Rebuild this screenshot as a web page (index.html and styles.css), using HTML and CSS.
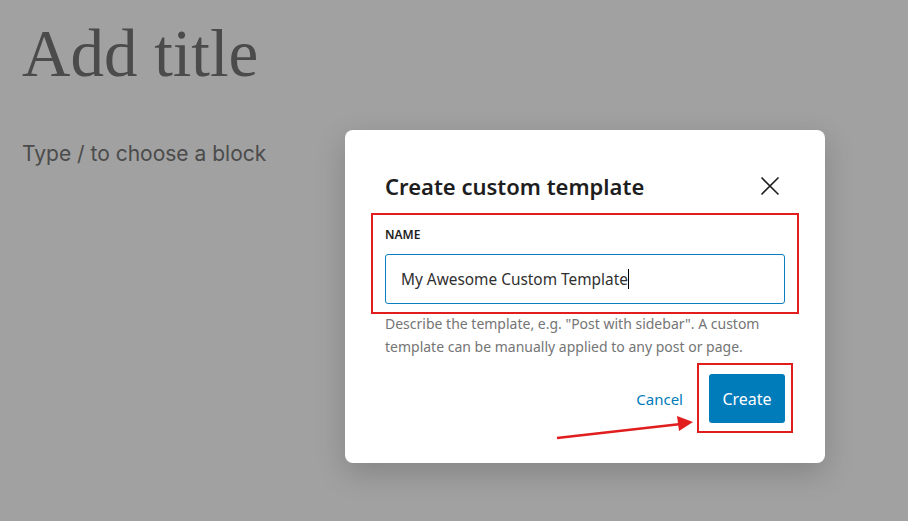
FILE: index.html
```html
<!DOCTYPE html>
<html lang="en">
<head>
    <meta charset="UTF-8">
    <meta name="viewport" content="width=device-width, initial-scale=1.0">
    <title>Create custom template</title>
    <link rel="stylesheet" href="styles.css">
</head>
<body>
    <div class="editor">
        <h1 class="post-title">Add title</h1>
        <p class="block-hint">Type / to choose a block</p>
    </div>

    <div class="modal">
        <div class="modal-header">
            <h2 class="modal-title">Create custom template</h2>
            <button class="close" aria-label="Close">
                <svg width="24" height="24" viewBox="0 0 24 24">
                    <path d="M3.5 3.5 L20.5 20.5 M20.5 3.5 L3.5 20.5" stroke="#1e1e1e" stroke-width="1.6" fill="none"/>
                </svg>
            </button>
        </div>

        <div class="field">
            <label class="field-label" for="tpl-name">NAME</label>
            <div class="field-input" id="tpl-name">My Awesome Custom Template<span class="caret"></span></div>
            <span class="mark mark-field"></span>
        </div>
        <p class="help">Describe the template, e.g. "Post with sidebar". A custom template can be manually applied to any post or page.</p>

        <div class="actions">
            <button class="btn-link">Cancel</button>
            <div class="create-wrap">
                <button class="btn-primary">Create</button>
                <span class="mark mark-create"></span>
            </div>
        </div>

        <svg class="arrow" width="150" height="30" viewBox="0 0 150 30">
            <line x1="2" y1="26" x2="126" y2="12" stroke="#e11d1d" stroke-width="2.5"/>
            <polygon points="138,10 122,4 124,19" fill="#e11d1d"/>
        </svg>
    </div>
</body>
</html>
```

FILE: styles.css
```css
*{
    margin: 0;
    padding: 0;
    box-sizing: border-box;
}

body{
    width: 908px;
    height: 521px;
    overflow: hidden;
    background: #a1a1a1;
    font-family: "Noto Sans", "Open Sans", sans-serif;
}

.editor{
    padding: 13px 22px;
}

.post-title{
    font-family: "Liberation Serif", serif;
    font-weight: 400;
    font-size: 67px;
    line-height: 80px;
    color: #4b4b4b;
}

.block-hint{
    margin-top: 48px;
    font-family: Inter, "Liberation Sans", sans-serif;
    font-size: 21px;
    color: #4b4b4b;
}

.modal{
    position: absolute;
    left: 345px;
    top: 130px;
    width: 480px;
    height: 333px;
    padding: 40px 40px 40px;
    background: #fff;
    border-radius: 8px;
    box-shadow: 0 10px 30px rgba(0,0,0,.18);
}

.modal-header{
    display: flex;
    justify-content: space-between;
    align-items: center;
    height: 32px;
}

.modal-title{
    font-size: 22px;
    font-weight: 600;
    color: #1e1e1e;
}

.close{
    border: none;
    background: none;
    width: 24px;
    height: 24px;
    margin-right: 3px;
    display: flex;
}

.field{
    position: relative;
    margin-top: 25px;
}

.field-label{
    display: block;
    font-size: 12px;
    line-height: 16px;
    font-weight: 600;
    color: #1e1e1e;
    margin-bottom: 11px;
}

.field-input{
    height: 50px;
    border: 1.5px solid #0a7fc0;
    border-radius: 3px;
    padding: 0 15px;
    display: flex;
    align-items: center;
    font-size: 15.4px;
    color: #2f2f2f;
}

.caret{
    display: inline-block;
    width: 1px;
    height: 20px;
    background: #000;
}

.help{
    margin-top: 8px;
    font-size: 14px;
    line-height: 23px;
    color: #757575;
}

.actions{
    display: flex;
    justify-content: flex-end;
    align-items: center;
    gap: 26px;
    margin-top: 16px;
}

.btn-link{
    border: none;
    background: none;
    font-family: inherit;
    font-size: 15px;
    color: #007cba;
}

.create-wrap{
    position: relative;
}

.btn-primary{
    display: block;
    width: 76px;
    height: 49px;
    border: none;
    border-radius: 3px;
    background: #007cba;
    color: #fff;
    font-family: inherit;
    font-size: 16px;
}

/* red annotation boxes */
.mark{
    position: absolute;
    border: 2px solid #e11d1d;
}

.mark-field{
    left: -14px;
    right: -14px;
    top: -14px;
    bottom: -10px;
}

.mark-create{
    left: -12px;
    right: -8px;
    top: -11px;
    bottom: -10px;
}

.arrow{
    position: absolute;
    left: 210px;
    top: 282px;
}
```
